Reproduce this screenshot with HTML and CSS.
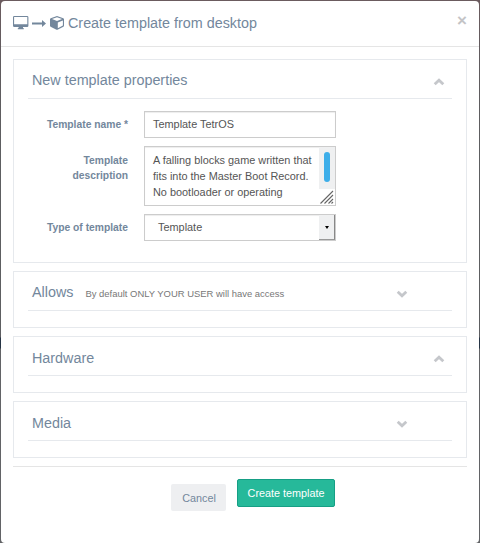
FILE: index.html
```html
<!DOCTYPE html>
<html lang="en">
<head>
<meta charset="utf-8">
<title>Create template from desktop</title>
<link rel="stylesheet" href="styles.css">
</head>
<body>
<div class="modal">
  <header class="modal-header">
    <svg class="icon-desktop" width="16" height="14" viewBox="0 0 16 14"><path fill-rule="evenodd" d="M1.300 0h12.800Q15.400 0 15.400 1.300v8.400Q15.400 11 14.100 11H10v1l.8.300v.9H4.800v-.9l.8-.3v-1H1.300Q0 11 0 9.700V1.300Q0 0 1.300 0zM1.100 1v7.200h13.200V1z"/></svg>
    <svg class="icon-arrow" width="14" height="7" viewBox="0 0 14 7"><path d="M0 2.400h10V.1L14 3.500l-4 3.400V4.600H0z"/></svg>
    <svg class="icon-cube" width="14" height="14" viewBox="0 0 14 14"><path fill-rule="evenodd" d="M7 0l6.300 2.300q.7.300.7 1v6.400q0 .7-.6 1L7.500 13.700q-.5.300-1 0L.6 10.700q-.6-.3-.6-1V3.300q0-.7.700-1zM7 1.200L2 3.100 7 5l5-1.900zM7.800 12.200L12.900 9.600V4.600L7.800 6.500z"/></svg>
    <h1 class="modal-title">Create template from desktop</h1>
    <button class="close" aria-label="Close">×</button>
  </header>
  <main class="modal-body">
    <section class="panel panel-form">
      <div class="panel-title raised"><h2>New template properties</h2>
        <svg class="chevron" width="12" height="8" viewBox="0 0 12 8"><path d="M1.700 6.300L6 2.200l4.300 4.100"/></svg></div>
      <form class="fields">
        <label class="label">Template name *</label>
        <div class="control">Template TetrOS</div>
        <label class="label">Template description</label>
        <div class="control description">
          <p class="description-text">A falling blocks game written that fits into the Master Boot Record. No bootloader or operating</p>
          <div class="scroll">
            <div class="track"><div class="thumb"></div></div>
            <svg class="grip" width="15" height="16" viewBox="0 0 15 16"><path d="M1.500 14.500L14 2M5.500 14.500L14 6M9.500 14.500l4.500-4.500M12.500 14.500l1.500-1.500"/></svg>
          </div>
        </div>
        <label class="label">Type of template</label>
        <div class="control select"><span class="select-value">Template</span><span class="select-button"><span class="caret"></span></span></div>
      </form>
    </section>
    <section class="panel">
      <div class="panel-title inset raised"><h2>Allows</h2><small>By default ONLY YOUR USER will have access</small>
        <svg class="chevron" width="12" height="8" viewBox="0 0 12 8"><path d="M1.700 1.700L6 5.800l4.300-4.100"/></svg></div>
    </section>
    <section class="panel">
      <div class="panel-title"><h2>Hardware</h2>
        <svg class="chevron" width="12" height="8" viewBox="0 0 12 8"><path d="M1.700 6.300L6 2.200l4.300 4.100"/></svg></div>
    </section>
    <section class="panel">
      <div class="panel-title inset"><h2>Media</h2>
        <svg class="chevron" width="12" height="8" viewBox="0 0 12 8"><path d="M1.700 1.700L6 5.800l4.300-4.100"/></svg></div>
    </section>
    <footer class="actions">
      <button class="btn btn-cancel">Cancel</button>
      <button class="btn btn-create">Create template</button>
    </footer>
  </main>
</div>
</body>
</html>
```
FILE: styles.css
```css
* { box-sizing: border-box; }
body {
  margin: 0;
  padding: 1px;
  height: 543px;
  overflow: hidden;
  background: linear-gradient(#6b5b5e 0, #605b5e 60px, #5d5e61 150px, #5d5e61 337px, #263445 338px, #263445 348px, #626366 349px);
  font: 10.9px/16px "Liberation Sans", Arial, sans-serif;
  color: #555;
}
h1, h2, p { margin: 0; font-weight: 400; }
.modal {
  height: 542px;
  background: #fff;
  border-radius: 4px;
}
.modal-header {
  display: flex;
  align-items: center;
  height: 46px;
  padding: 0 12px;
  border-bottom: 1px solid #e5e5e5;
  color: #73879c;
  fill: #73879c;
}
.icon-desktop { margin: -1px 3px 0 0; }
.icon-arrow { margin: -1px 4px 0 0; }
.icon-cube { margin: -1px 4px 0 0; }
.modal-title, h2 { font-size: 14.35px; line-height: 20px; color: #73879c; }
.modal-title { margin-top: -1px; }
.close {
  margin: -6px 0 0 auto;
  padding: 0;
  border: 0;
  background: none;
  font: bold 17px/18px "Liberation Sans", Arial, sans-serif;
  color: #c4c4c6;
}
.modal-body { padding: 12px; }
.panel {
  height: 57px;
  margin-bottom: 8px;
  padding: 0 14px;
  border: 1px solid #e6e9ed;
}
.panel-form { height: 204px; }
.panel-title {
  display: flex;
  align-items: center;
  height: 39px;
  padding: 3px 7px 0 4px;
  border-bottom: 1px solid #e6e9ed;
}
.panel-title.inset { padding-right: 44px; }
.raised h2 { margin-top: -2px; }
.panel-title small { margin: 3px 0 0 12px; font-size: 9.45px; line-height: 14px; color: #777; }
.chevron {
  margin: 3px 0 0 auto;
  fill: none;
  stroke: #c5c7cb;
  stroke-width: 2.800;
}
.fields {
  display: grid;
  grid-template-columns: 100px 192px;
  column-gap: 16px;
  row-gap: 8px;
  padding-top: 12px;
}
.label {
  padding-top: 6px;
  font-size: 10.3px;
  font-weight: 700;
  line-height: 15px;
  text-align: right;
  color: #73879c;
}
.label:nth-of-type(2) { padding-top: 7px; }
.control {
  height: 27px;
  padding: 3px 8px;
  border: 1px solid #ccc;
  line-height: 18px;
  box-shadow: inset 0 1px 1px rgba(0, 0, 0, .075);
}
.description { display: flex; height: 60px; padding: 0; }
.description-text { width: 174px; height: 58px; padding: 5px 0 0 8px; line-height: 16px; }
.scroll { width: 16px; }
.track { height: 42px; padding: 5px; background: #eff0f1; }
.thumb { width: 6px; height: 30px; border-radius: 3px; background: #3daee9; }
.grip { display: block; fill: none; stroke: #666; stroke-width: 1.1; }
.select { display: flex; padding: 0; line-height: 25px; }
.select-value { width: 174px; padding-left: 13px; }
.select-button {
  display: flex;
  align-items: center;
  justify-content: center;
  width: 16px;
  background: #eff0f1;
  border-right: 1px solid #888;
  border-bottom: 1px solid #999;
}
.caret { border: 2.5px solid transparent; border-top: 3px solid #000; border-bottom: 0; }
.actions {
  display: flex;
  align-items: flex-start;
  gap: 11px;
  padding: 12px 0 0 158px;
  border-top: 1px solid #e5e5e5;
}
.btn {
  height: 27px;
  padding: 0;
  border: 0;
  border-radius: 2px;
  font: 10.8px/26px "Liberation Sans", Arial, sans-serif;
}
.btn-cancel { width: 55px; margin-top: 5px; padding-left: 1px; background: #eeeff1; color: #73879c; }
.btn-create { width: 98px; height: 28px; border: 1px solid #169f85; background: #26b99a; color: #fff; }
```
